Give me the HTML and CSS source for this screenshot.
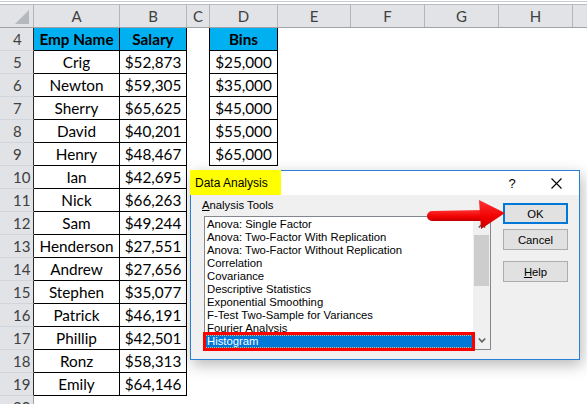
FILE: index.html
```html
<!DOCTYPE html>
<html>
<head>
<meta charset="utf-8">
<link rel="stylesheet" href="styles.css">
</head>
<body>
<div class="topband"></div>
<div class="sheet">
  <div class="srow hrow">
    <div class="ch corner"><svg width="14" height="14" viewBox="0 0 14 14"><polygon points="14,0 14,14 0,14" fill="#b5b8bd"/></svg></div>
    <div class="ch">A</div><div class="ch">B</div><div class="ch">C</div><div class="ch">D</div>
    <div class="ch">E</div><div class="ch">F</div><div class="ch">G</div><div class="ch">H</div><div class="ch last"></div>
  </div>
  <div class="srow"><div class="rh dk">4</div><div class="c bd hd">Emp Name</div><div class="c bd hd">Salary</div><div class="c br"></div><div class="c bd hd">Bins</div></div>
  <div class="srow"><div class="rh dk">5</div><div class="c bd">Crig</div><div class="c bd">$52,873</div><div class="c br"></div><div class="c bd">$25,000</div></div>
  <div class="srow"><div class="rh dk">6</div><div class="c bd">Newton</div><div class="c bd">$59,305</div><div class="c br"></div><div class="c bd">$35,000</div></div>
  <div class="srow"><div class="rh dk">7</div><div class="c bd">Sherry</div><div class="c bd">$65,625</div><div class="c br"></div><div class="c bd">$45,000</div></div>
  <div class="srow"><div class="rh dk">8</div><div class="c bd">David</div><div class="c bd">$40,201</div><div class="c br"></div><div class="c bd">$55,000</div></div>
  <div class="srow"><div class="rh dk">9</div><div class="c bd">Henry</div><div class="c bd">$48,467</div><div class="c br"></div><div class="c bd">$65,000</div></div>
  <div class="srow"><div class="rh dk">10</div><div class="c bd">Ian</div><div class="c bd">$42,695</div></div>
  <div class="srow"><div class="rh dk">11</div><div class="c bd">Nick</div><div class="c bd">$66,263</div></div>
  <div class="srow"><div class="rh dk">12</div><div class="c bd">Sam</div><div class="c bd">$49,244</div></div>
  <div class="srow"><div class="rh dk">13</div><div class="c bd">Henderson</div><div class="c bd">$27,551</div></div>
  <div class="srow"><div class="rh dk">14</div><div class="c bd">Andrew</div><div class="c bd">$27,656</div></div>
  <div class="srow"><div class="rh dk">15</div><div class="c bd">Stephen</div><div class="c bd">$35,077</div></div>
  <div class="srow"><div class="rh dk">16</div><div class="c bd">Patrick</div><div class="c bd">$46,191</div></div>
  <div class="srow"><div class="rh dk">17</div><div class="c bd">Phillip</div><div class="c bd">$42,501</div></div>
  <div class="srow"><div class="rh dk">18</div><div class="c bd">Ronz</div><div class="c bd">$58,313</div></div>
  <div class="srow"><div class="rh dk">19</div><div class="c bd">Emily</div><div class="c bd">$64,146</div></div>
  <div class="srow"><div class="rh">20</div></div>
</div>

<div class="dlg">
  <div class="titlebar">
    <div class="title">Data Analysis</div>
    <div class="tb-space"></div>
    <div class="qmark">?</div>
    <svg class="xbtn" width="11" height="11" viewBox="0 0 11 11"><path d="M0.5 0.5 L10.5 10.5 M10.5 0.5 L0.5 10.5" stroke="#000" stroke-width="1.1" fill="none"/></svg>
  </div>
  <div class="dbody">
    <div class="leftcol">
      <div class="label"><u>A</u>nalysis Tools</div>
      <div class="listbox">
        <div class="items">
          <div class="item">Anova: Single Factor</div>
          <div class="item">Anova: Two-Factor With Replication</div>
          <div class="item">Anova: Two-Factor Without Replication</div>
          <div class="item">Correlation</div>
          <div class="item">Covariance</div>
          <div class="item">Descriptive Statistics</div>
          <div class="item">Exponential Smoothing</div>
          <div class="item">F-Test Two-Sample for Variances</div>
          <div class="item">Fourier Analysis</div>
          <div class="item sel">Histogram</div>
        </div>
        <div class="scroll">
          <div class="sbtn"><svg width="8" height="5" viewBox="0 0 8 5"><polyline points="0.8,4.5 4,1.2 7.2,4.5" fill="none" stroke="#606060" stroke-width="1.6"/></svg></div>
          <div class="thumb"></div>
          <div class="track"></div>
          <div class="sbtn"><svg width="8" height="5" viewBox="0 0 8 5"><polyline points="0.8,0.5 4,3.8 7.2,0.5" fill="none" stroke="#606060" stroke-width="1.6"/></svg></div>
        </div>
      </div>
    </div>
    <div class="rightcol">
      <div class="btn def">OK</div>
      <div class="btn cancel">Cancel</div>
      <div class="btn help"><span><u>H</u>elp</span></div>
    </div>
  </div>
  <div class="redbox"></div>
</div>

<svg class="arrow" width="84" height="36" viewBox="0 0 84 36">
  <defs>
    <linearGradient id="ag" x1="0" y1="0" x2="0" y2="1">
      <stop offset="0" stop-color="#ff3030"/>
      <stop offset="0.6" stop-color="#f00000"/>
      <stop offset="1" stop-color="#c40000"/>
    </linearGradient>
  </defs>
  <path d="M7 13 L57 12 L57 23 L7 23 A5 5 0 0 1 7 13 Z" fill="url(#ag)"/>
  <polygon points="54,2 80,15 56,31" fill="url(#ag)"/>
</svg>
</body>
</html>
```

FILE: styles.css
```css
body {
  margin: 0;
  width: 587px;
  height: 404px;
  overflow: hidden;
  background: #fff;
  position: relative;
  font-family: Lato, "Liberation Sans", sans-serif;
}

.topband {
  height: 4px;
  background: linear-gradient(#ffffff 0 1px, #c8ccd2 1px 2px, #ffffff 2px);
}

.srow {
  display: grid;
  grid-template-columns: 34px 86px 67px 23px 68px 73px 74px 74px 74px 1fr;
  height: 23px;
}

.hrow {
  height: 24px;
  box-sizing: border-box;
  border-top: 1px solid #b9bcc0;
  border-bottom: 1px solid #9fa2a6;
  background: #e1e3e6;
}

.ch {
  border-right: 1px solid #b3b5b8;
  display: flex;
  align-items: center;
  justify-content: center;
  font-size: 15px;
  color: #404040;
}

.ch.last { border-right: none; }

.corner {
  justify-content: flex-end;
  align-items: flex-end;
  padding: 0 4px 3px 0;
}

.rh {
  background: #e1e3e6;
  border-right: 1px solid #9fa2a6;
  border-bottom: 1px solid #d2d5d9;
  box-sizing: border-box;
  display: flex;
  align-items: center;
  padding-left: 13px;
  font-size: 15px;
  color: #404040;
}

.rh.dk { border-right-color: #2a2a2a; }

.c {
  box-sizing: border-box;
  display: flex;
  align-items: center;
  justify-content: center;
  font-size: 15.3px;
  color: #000;
  white-space: nowrap;
}

.bd {
  border-right: 1px solid #000;
  border-bottom: 1px solid #000;
}

.br { border-right: 1px solid #000; }

.hd {
  background: #00b0f0;
  font-weight: bold;
}

/* dialog */
.dlg {
  position: absolute;
  left: 190px;
  top: 170px;
  width: 390px;
  height: 190px;
  box-sizing: border-box;
  border: 1px solid #2a80d2;
  background: #f0f0f0;
  box-shadow: 2px 5px 14px rgba(0, 0, 0, 0.28);
  display: flex;
  flex-direction: column;
  font-family: "Liberation Sans", Arial, sans-serif;
  font-size: 11.3px;
  color: #000;
}

.titlebar {
  height: 24px;
  flex-shrink: 0;
  background: #fff;
  display: flex;
  align-items: center;
  padding-right: 17px;
}

.title {
  align-self: flex-start;
  margin: -1px 0 0 -1px;
  width: 91px;
  height: 25px;
  box-sizing: border-box;
  padding-left: 5px;
  background: #ffff00;
  display: flex;
  align-items: center;
  font-size: 12px;
}

.tb-space { flex: 1; }

.qmark {
  width: 12px;
  text-align: center;
  font-size: 13px;
  margin-right: 33px;
}

.xbtn { display: block; }

.dbody {
  flex: 1;
  display: flex;
  gap: 12px;
  padding: 4px 0 0 13px;
}

.leftcol {
  width: 287px;
  display: flex;
  flex-direction: column;
}

.label {
  height: 13px;
  line-height: 13px;
  margin-left: -2px;
}

.listbox {
  margin-top: 4px;
  height: 134px;
  box-sizing: border-box;
  border: 1px solid #828790;
  background: #fff;
  display: flex;
}

.items {
  flex: 1;
  padding-top: 1px;
  overflow: hidden;
}

.item {
  height: 13px;
  line-height: 13px;
  padding-left: 2px;
  white-space: nowrap;
}

.item.sel {
  background: #0078d7;
  color: #fff;
  outline: 1px dotted #e9b56a;
  outline-offset: -1px;
}

.scroll {
  width: 17px;
  background: #f0f0f0;
  display: flex;
  flex-direction: column;
}

.sbtn {
  height: 17px;
  display: flex;
  align-items: center;
  justify-content: center;
}

.thumb {
  height: 51px;
  margin: 1px 1px 0;
  background: #cdcdcd;
}

.track { flex: 1; }

.rightcol {
  width: 65px;
  display: flex;
  flex-direction: column;
  padding-top: 4px;
}

.btn {
  height: 21px;
  box-sizing: border-box;
  border: 1px solid #adadad;
  background: #e1e1e1;
  display: flex;
  align-items: center;
  justify-content: center;
}

.btn.def { border: 2px solid #0078d7; }
.btn.cancel { margin-top: 5px; }
.btn.help { margin-top: 11px; }

.redbox {
  position: absolute;
  left: 12px;
  top: 161px;
  width: 272px;
  height: 19px;
  box-sizing: border-box;
  border: 3px solid #ff0000;
}

.arrow {
  position: absolute;
  left: 425px;
  top: 198px;
}
```
